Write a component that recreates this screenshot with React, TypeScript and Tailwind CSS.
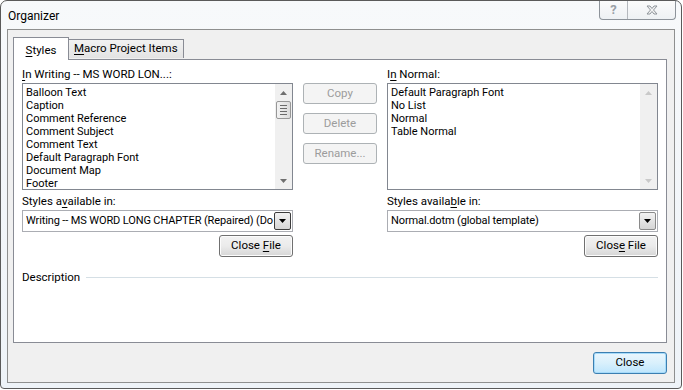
import React from "react";

const leftItems = [
  "Balloon Text",
  "Caption",
  "Comment Reference",
  "Comment Subject",
  "Comment Text",
  "Default Paragraph Font",
  "Document Map",
  "Footer",
];

const rightItems = ["Default Paragraph Font", "No List", "Normal", "Table Normal"];

function U({ children }: { children: React.ReactNode }) {
  return <span className="underline underline-offset-2">{children}</span>;
}

function Arrow({ dir, dim }: { dir: "up" | "down"; dim?: boolean }) {
  return (
    <svg width="7" height="4" viewBox="0 0 7 4" className="block">
      <path
        d={dir === "up" ? "M0 4 L3.5 0 L7 4 Z" : "M0 0 L3.5 4 L7 0 Z"}
        fill={dim ? "#c9c9c9" : "#6f6f6f"}
      />
    </svg>
  );
}

function ListBox({ items, scroll }: { items: string[]; scroll: boolean }) {
  return (
    <div className="flex h-[107px] border border-[#828790] bg-white">
      {/* items */}
      <div className="flex-1 overflow-hidden pl-[3px] pt-[2px] text-[11px] leading-[13px] text-black">
        {items.map((item) => (
          <div key={item} className="whitespace-nowrap">
            {item}
          </div>
        ))}
      </div>
      {/* scrollbar */}
      <div className="flex w-[17px] flex-col items-center bg-[#f0f0f0]">
        <div className="flex h-[17px] items-center justify-center">
          <Arrow dir="up" dim={!scroll} />
        </div>
        {scroll ? (
          <div className="flex h-[18px] w-[15px] flex-col items-center justify-center gap-[2px] rounded-[2px] border border-[#979797] bg-gradient-to-r from-[#f3f3f3] to-[#dcdcdc]">
            <div className="h-px w-[7px] bg-[#6b6b6b]" />
            <div className="h-px w-[7px] bg-[#6b6b6b]" />
            <div className="h-px w-[7px] bg-[#6b6b6b]" />
            <div className="h-px w-[7px] bg-[#6b6b6b]" />
          </div>
        ) : null}
        <div className="flex-1" />
        <div className="flex h-[17px] items-center justify-center">
          <Arrow dir="down" dim={!scroll} />
        </div>
      </div>
    </div>
  );
}

function Combo({ value, focus }: { value: string; focus?: boolean }) {
  return (
    <div className="flex h-[22px] items-center border border-[#abadb3] bg-white pl-[3px] pr-[1px]">
      <span className="flex-1 overflow-hidden whitespace-nowrap text-[11px] tracking-[-0.12px] text-black">
        {value}
      </span>
      <div
        className={`flex h-[18px] w-[17px] items-center justify-center rounded-[2px] border bg-gradient-to-b from-[#f2f2f2] to-[#d5d5d5] ${
          focus ? "border-[#3c3c3c]" : "border-[#8a8a8a]"
        }`}
      >
        <svg width="7" height="4" viewBox="0 0 7 4">
          <path d="M0 0 L3.5 4 L7 0 Z" fill="#000" />
        </svg>
      </div>
    </div>
  );
}

function PushButton({
  children,
  disabled,
  primary,
}: {
  children: React.ReactNode;
  disabled?: boolean;
  primary?: boolean;
}) {
  if (disabled) {
    return (
      <div className="flex h-[21px] w-[74px] items-center justify-center rounded-[3px] border border-[#adb2b5] bg-[#f4f4f4] text-[11.5px] text-[#9c9c9c]">
        <span>{children}</span>
      </div>
    );
  }
  return (
    <div
      className={`flex h-[22px] w-[74px] items-center justify-center rounded-[3px] border text-[11.5px] text-black ${
        primary
          ? "border-[#3c7fb1] bg-gradient-to-b from-[#eaf6fd] via-[#d9f0fc] to-[#bee6fd] shadow-[inset_0_0_0_1px_#a6dbfa]"
          : "border-[#707070] bg-gradient-to-b from-[#f2f2f2] via-[#ebebeb] to-[#d6d6d6] shadow-[inset_0_0_0_1px_#fcfcfc]"
      }`}
    >
      <span>{children}</span>
    </div>
  );
}

export default function App() {
  return (
    <div
      className="h-[390px] w-[683px] overflow-hidden bg-white"
      style={{ fontFamily: 'Roboto, "Noto Sans", sans-serif' }}
    >
      {/* window frame */}
      <div className="flex h-[389px] w-[682px] flex-col rounded-t-[7px] rounded-b-[4px] border border-[#5a5a5a] bg-gradient-to-b from-[#f7f9fb] to-[#eef3f8]">
        {/* title bar */}
        <div className="flex h-[28px] items-start">
          <span className="pl-[7px] pt-[6px] text-[12px] text-black">Organizer</span>
          <div className="flex-1" />
          <div className="mr-[5px] flex h-[19px] overflow-hidden rounded-b-[4px] border border-t-0 border-[#8d939a] bg-gradient-to-b from-[#fbfbfb] to-[#eef1f4]">
            <div className="flex w-[28px] items-center justify-center border-r border-[#b4b8bd] text-[13px] font-bold text-[#9aa0a6]">
              ?
            </div>
            <div className="flex w-[47px] items-center justify-center">
              <svg width="12" height="10" viewBox="0 0 12 10">
                <path
                  d="M1 1 L4 1 L6 3.5 L8 1 L11 1 L7.5 5 L11 9 L8 9 L6 6.5 L4 9 L1 9 L4.5 5 Z"
                  fill="#f4f4f4"
                  stroke="#8e949a"
                  strokeWidth="1"
                  strokeLinejoin="round"
                />
              </svg>
            </div>
          </div>
        </div>

        {/* client area */}
        <div className="mx-[6px] flex h-[354px] flex-col border border-[#8e8f8f] bg-[#f0f0f0]">
          {/* tabs */}
          <div className="flex h-[29px] items-end pl-[5px]">
            <div className="relative z-10 -mb-px flex h-[23px] w-[56px] items-start justify-center border border-b-0 border-[#898c95] bg-white pt-[4px] text-[11.5px] text-black">
              <span>
                <U>S</U>tyles
              </span>
            </div>
            <div className="mb-px flex h-[19px] items-center border border-b-0 border-l-0 border-[#898c95] bg-gradient-to-b from-[#f2f2f2] to-[#e3e3e3] px-[5px] text-[11.5px] text-black">
              <span>
                <U>M</U>acro Project Items
              </span>
            </div>
          </div>

          {/* tab panel */}
          <div className="ml-[5px] mr-[7px] h-[284px] border border-[#898c95] bg-white px-[8px] pt-[6px] text-[11.5px]">
            <div className="flex gap-[10px]">
              {/* left column */}
              <div className="flex w-[271px] flex-col">
                <div className="h-[17px] text-black">
                  <U>I</U>n Writing -- MS WORD LON...:
                </div>
                <ListBox items={leftItems} scroll />
                <div className="mt-[3px] h-[17px] text-black">
                  Styles a<U>v</U>ailable in:
                </div>
                <Combo value="Writing -- MS WORD LONG CHAPTER (Repaired) (Do" focus />
                <div className="mt-[3px] flex justify-end">
                  <PushButton>
                    Close <U>F</U>ile
                  </PushButton>
                </div>
              </div>

              {/* middle buttons */}
              <div className="flex flex-col gap-[9px] pt-[17px]">
                <PushButton disabled>Copy</PushButton>
                <PushButton disabled>Delete</PushButton>
                <PushButton disabled>Rename...</PushButton>
              </div>

              {/* right column */}
              <div className="flex w-[271px] flex-col">
                <div className="h-[17px] text-black">
                  I<U>n</U> Normal:
                </div>
                <ListBox items={rightItems} scroll={false} />
                <div className="mt-[3px] h-[17px] text-black">
                  Styles availa<U>b</U>le in:
                </div>
                <Combo value="Normal.dotm (global template)" />
                <div className="mt-[3px] flex justify-end">
                  <PushButton>
                    Clos<U>e</U> File
                  </PushButton>
                </div>
              </div>
            </div>

            {/* description */}
            <div className="mt-[12px] flex items-center gap-[6px]">
              <span className="text-black">Description</span>
              <div className="h-px flex-1 bg-[#d5dfe5]" />
            </div>
          </div>

          {/* footer */}
          <div className="flex flex-1 items-center justify-end pr-[7px] pt-px">
            <PushButton primary>Close</PushButton>
          </div>
        </div>
      </div>
    </div>
  );
}
